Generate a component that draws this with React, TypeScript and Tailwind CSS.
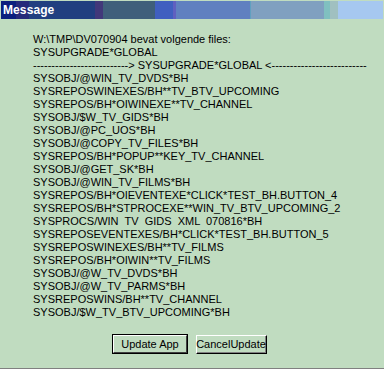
import React from "react";

const lines = [
  "W:\\TMP\\DV070904 bevat volgende files:",
  "SYSUPGRADE*GLOBAL",
  "--------------------------> SYSUPGRADE*GLOBAL <--------------------------",
  "SYSOBJ/@WIN_TV_DVDS*BH",
  "SYSREPOSWINEXES/BH**TV_BTV_UPCOMING",
  "SYSREPOS/BH*OIWINEXE**TV_CHANNEL",
  "SYSOBJ/$W_TV_GIDS*BH",
  "SYSOBJ/@PC_UOS*BH",
  "SYSOBJ/@COPY_TV_FILES*BH",
  "SYSREPOS/BH*POPUP**KEY_TV_CHANNEL",
  "SYSOBJ/@GET_SK*BH",
  "SYSOBJ/@WIN_TV_FILMS*BH",
  "SYSREPOS/BH*OIEVENTEXE*CLICK*TEST_BH.BUTTON_4",
  "SYSREPOS/BH*STPROCEXE**WIN_TV_BTV_UPCOMING_2",
  "SYSPROCS/WIN  TV  GIDS  XML  070816*BH",
  "SYSREPOSEVENTEXES/BH*CLICK*TEST_BH.BUTTON_5",
  "SYSREPOSWINEXES/BH**TV_FILMS",
  "SYSREPOS/BH*OIWIN**TV_FILMS",
  "SYSOBJ/@W_TV_DVDS*BH",
  "SYSOBJ/@W_TV_PARMS*BH",
  "SYSREPOSWINS/BH**TV_CHANNEL",
  "SYSOBJ/$W_TV_BTV_UPCOMING*BH",
];

export default function App() {
  return (
    <div
      className="w-[384px] h-[369px] bg-[#c0dcc0] border-b border-[#808080] flex flex-col overflow-hidden"
      style={{ fontFamily: '"Liberation Sans", Arial, sans-serif' }}
    >
      <div className="mt-[1px] mx-[1px] h-[18px] bg-[linear-gradient(to_right,#0c1f7e_0px,#0c1f7e_15px,#26297a_15px,#26297a_28px,#213f80_28px,#213f80_94px,#41387a_94px,#41387a_102px,#3f5f7b_102px,#3f5f7b_154px,#405fc0_154px,#405fc0_172px,#6060c0_172px,#6060c0_175px,#6080c0_175px,#6080c0_249px,#60a0c0_249px,#60a0c0_250px,#80a0c0_250px,#80a0c0_323px,#80c0c0_323px,#80c0c0_329px,#a0c0c0_329px,#a0c0c0_337px,#a6c8f0_337px,#a6c8f0_100%)] flex items-center pl-[2px]">
        <span className="text-white font-bold text-[12px] leading-none tracking-[0.1px]">Message</span>
      </div>
      <div className="pt-[14px] pl-[33px] flex flex-col text-[11px] leading-[13px] text-black whitespace-pre">
        {lines.map((l, i) => (
          <div key={i}>{l}</div>
        ))}
      </div>
      <div className="mt-[15px] flex justify-start gap-[8px] pl-[112px]">
        <button className="w-[76px] h-[20px] border border-black bg-[#c0dcc0] text-[11px] text-black flex items-center justify-center">
          <span className="w-full h-full border-t border-l border-white border-r border-b border-r-[#404040] border-b-[#404040] flex items-center justify-center">
            Update App
          </span>
        </button>
        <button className="w-[71px] h-[19px] mt-[1px] border-t border-l border-white border-r border-b border-r-black border-b-black bg-[#c0dcc0] text-[11px] text-black flex items-center justify-center">
          <span className="w-full h-full border-r border-b border-[#808080] flex items-center justify-center">
            CancelUpdate
          </span>
        </button>
      </div>
    </div>
  );
}
